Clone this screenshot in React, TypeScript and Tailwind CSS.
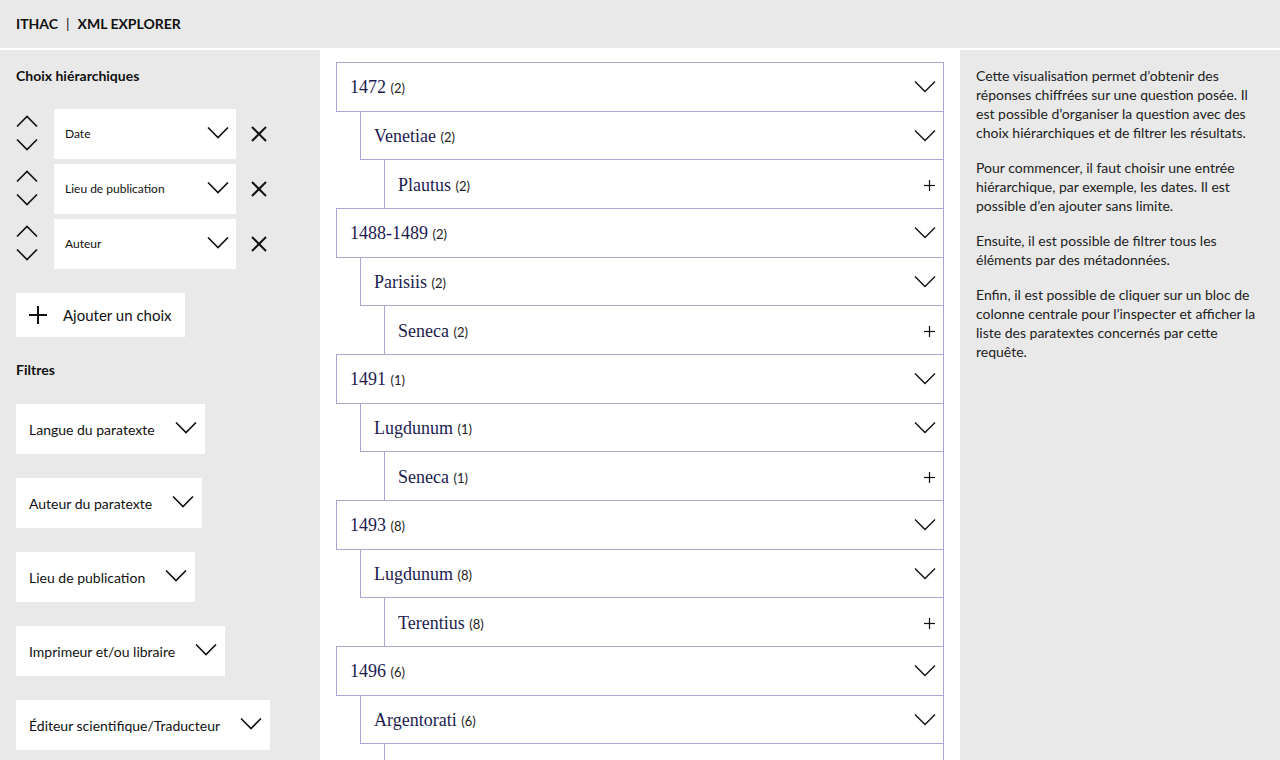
import type { ReactNode } from 'react'

type Node = { label: string; count: number; children?: Node[] }

const TREE: Node[] = [
  { label: '1472', count: 2, children: [{ label: 'Venetiae', count: 2, children: [{ label: 'Plautus', count: 2 }] }] },
  { label: '1488-1489', count: 2, children: [{ label: 'Parisiis', count: 2, children: [{ label: 'Seneca', count: 2 }] }] },
  { label: '1491', count: 1, children: [{ label: 'Lugdunum', count: 1, children: [{ label: 'Seneca', count: 1 }] }] },
  { label: '1493', count: 8, children: [{ label: 'Lugdunum', count: 8, children: [{ label: 'Terentius', count: 8 }] }] },
  { label: '1496', count: 6, children: [{ label: 'Argentorati', count: 6, children: [{ label: 'Terentius', count: 6 }] }] },
]

const HIERARCHY = ['Date', 'Lieu de publication', 'Auteur']
const FILTERS = [
  'Langue du paratexte',
  'Auteur du paratexte',
  'Lieu de publication',
  'Imprimeur et/ou libraire',
  'Éditeur scientifique/Traducteur',
]

const SANS = "font-['Lato','Open_Sans',sans-serif]"

function Chevron({ up = false, thin = false }: { up?: boolean; thin?: boolean }) {
  return (
    <svg width="22" height="12" viewBox="0 0 22 12" fill="none" stroke="#111" strokeWidth={thin ? 1.4 : 1.6} aria-hidden="true">
      {up ? <polyline points="1,11.5 11,1.5 21,11.5" /> : <polyline points="1,0.5 11,10.5 21,0.5" />}
    </svg>
  )
}

function Cross() {
  return (
    <svg width="16" height="16" viewBox="0 0 16 16" stroke="#111" strokeWidth="2" aria-hidden="true">
      <line x1="1" y1="1" x2="15" y2="15" />
      <line x1="15" y1="1" x2="1" y2="15" />
    </svg>
  )
}

function Plus({ size, stroke }: { size: number; stroke: number }) {
  return (
    <svg width={size} height={size} viewBox={`0 0 ${size} ${size}`} stroke="#111" strokeWidth={stroke} aria-hidden="true">
      <line x1={size / 2} y1="0" x2={size / 2} y2={size} />
      <line x1="0" y1={size / 2} x2={size} y2={size / 2} />
    </svg>
  )
}

function TreeRow({ node, depth }: { node: Node; depth: number }) {
  const leaf = !node.children
  const indent = depth === 0 ? 'ml-0' : depth === 1 ? 'ml-6' : 'ml-12'
  return (
    <>
      <div
        className={`${indent} -mb-px flex h-[49.67px] items-center justify-between border border-[#a8a8d0] bg-white pl-[13px] pr-[7px]`}
      >
        <span className="pt-[2px] text-[18px] text-[#1c1c50] font-['Liberation_Serif','Times_New_Roman',serif]">
          {node.label}{' '}
          <span className={`text-[13px] text-[#222] ${SANS}`}>({node.count})</span>
        </span>
        {leaf ? (
          <span className="mr-[1px] mt-[3px]">
            <Plus size={11} stroke={1.2} />
          </span>
        ) : (
          <span className="mt-[1px]">
            <Chevron thin />
          </span>
        )}
      </div>
      {node.children?.map((c, i) => <TreeRow key={i} node={c} depth={depth + 1} />)}
    </>
  )
}

function Heading({ children }: { children: ReactNode }) {
  return <h2 className="h-5 text-[14px] font-bold leading-5 text-[#111]">{children}</h2>
}

export default function App() {
  return (
    <div className={`flex h-screen flex-col overflow-hidden bg-[#e9e9e9] ${SANS}`}>
      <header className="flex h-[50px] shrink-0 items-center border-b-2 border-white px-4 pb-[2px] text-[14px] font-bold text-[#111]">
        <span>ITHAC</span>
        <span className="mx-[8px] font-normal">|</span>
        <span>XML EXPLORER</span>
      </header>

      <div className="flex min-h-0 flex-1">
        <aside className="w-[320px] shrink-0 px-4 pt-4">
          <Heading>Choix hiérarchiques</Heading>
          <div className="mt-[23px] flex flex-col gap-[5px]">
            {HIERARCHY.map((h) => (
              <div key={h} className="flex items-center">
                <div className="flex w-[22px] flex-col gap-3 pb-[2px]">
                  <Chevron up />
                  <Chevron />
                </div>
                <div className="ml-4 flex h-[50px] w-[182px] items-center justify-between bg-white pl-[11px] pr-[7px]">
                  <span className="text-[12px] text-[#111]">{h}</span>
                  <span className="-mt-[2px]">
                    <Chevron />
                  </span>
                </div>
                <span className="ml-[15px]">
                  <Cross />
                </span>
              </div>
            ))}
          </div>

          <button className="mt-6 flex h-[44px] items-center bg-white pl-[13px] pr-[13px] text-[15px] text-[#111]">
            <Plus size={18} stroke={2} />
            <span className="ml-4">Ajouter un choix</span>
          </button>

          <div className="mt-[23px]">
            <Heading>Filtres</Heading>
          </div>
          <div className="mt-6 flex flex-col items-start gap-6">
            {FILTERS.map((f) => (
              <div key={f} className="flex h-[50px] items-center bg-white pl-[13px] pr-[8px]">
                <span className="text-[14px] text-[#111]">{f}</span>
                <span className="ml-5 -mt-[2px]">
                  <Chevron />
                </span>
              </div>
            ))}
          </div>
        </aside>

        <main className="w-[640px] shrink-0 overflow-hidden bg-white pl-4 pr-4 pt-3">
          {TREE.map((n, i) => (
            <TreeRow key={i} node={n} depth={0} />
          ))}
        </main>

        <section className="flex-1 px-4 pt-[16px] text-[14px] leading-[19px] text-[#222]">
          <p>
            Cette visualisation permet d’obtenir des réponses chiffrées sur une question posée. Il est possible
            d’organiser la question avec des choix hiérarchiques et de filtrer les résultats.
          </p>
          <p className="mt-4">
            Pour commencer, il faut choisir une entrée hiérarchique, par exemple, les dates. Il est possible d’en
            ajouter sans limite.
          </p>
          <p className="mt-4">Ensuite, il est possible de filtrer tous les éléments par des métadonnées.</p>
          <p className="mt-4">
            Enfin, il est possible de cliquer sur un bloc de colonne centrale pour l’inspecter et afficher la liste
            des paratextes concernés par cette requête.
          </p>
        </section>
      </div>
    </div>
  )
}
